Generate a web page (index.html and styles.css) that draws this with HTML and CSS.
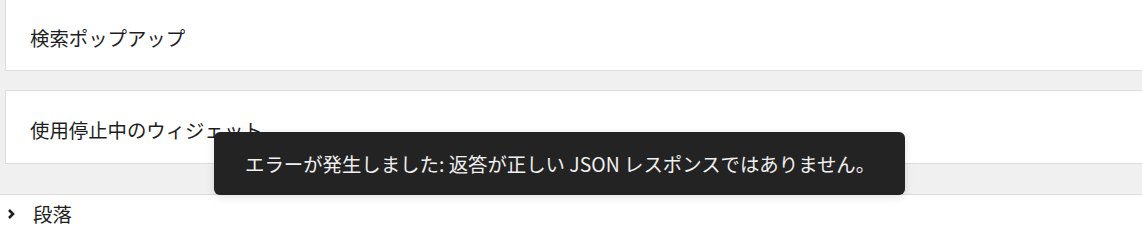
FILE: index.html
```html
<!DOCTYPE html>
<html lang="ja">
<head>
  <meta charset="UTF-8">
  <title>ウィジェット</title>
  <link rel="stylesheet" href="styles.css">
</head>
<body>
  <div class="panel">
    <div class="card card-first">検索ポップアップ</div>
    <div class="card card-second">使用停止中のウィジェット</div>
  </div>

  <div class="section">
    <svg class="chevron" width="8" height="12" viewBox="0 0 8 12">
      <path d="M2 2 L6 6 L2 10" fill="none" stroke="#1e1e1e" stroke-width="2.6"/>
    </svg>
    <span>段落</span>
  </div>

  <div class="toast">エラーが発生しました: 返答が正しい JSON レスポンスではありません。</div>
</body>
</html>
```

FILE: styles.css
```css
body {
  margin: 0;
  background: #fff;
  font-family: "Noto Sans CJK JP", "Noto Sans", sans-serif;
  font-size: 19.4px;
  color: #1e1e1e;
  overflow: hidden;
}

.panel {
  background: #f0f0f0;
  padding: 0 0 30px 5px;
}

.card {
  background: #fff;
  border: 1px solid #dcdcdc;
  border-right: none;
  padding-left: 24px;
  line-height: 26px;
}

.card-first {
  border-top: none;
  padding-top: 25px;
  padding-bottom: 19px;
}

.card-second {
  margin-top: 19px;
  padding-top: 26px;
  padding-bottom: 20px;
}

.section {
  border-top: 1px solid #dcdcdc;
  display: flex;
  align-items: center;
  gap: 18px;
  padding: 6px 0 0 7px;
  line-height: 26px;
}

.chevron {
  display: block;
}

.toast {
  position: absolute;
  left: 214px;
  top: 132px;
  width: 660px;
  height: 63px;
  padding-left: 31px;
  box-sizing: content-box;
  background: #232323;
  color: #f0f0f0;
  border-radius: 6px;
  line-height: 63px;
  white-space: nowrap;
  box-shadow: 0 2px 8px rgba(0, 0, 0, 0.12);
}
```
